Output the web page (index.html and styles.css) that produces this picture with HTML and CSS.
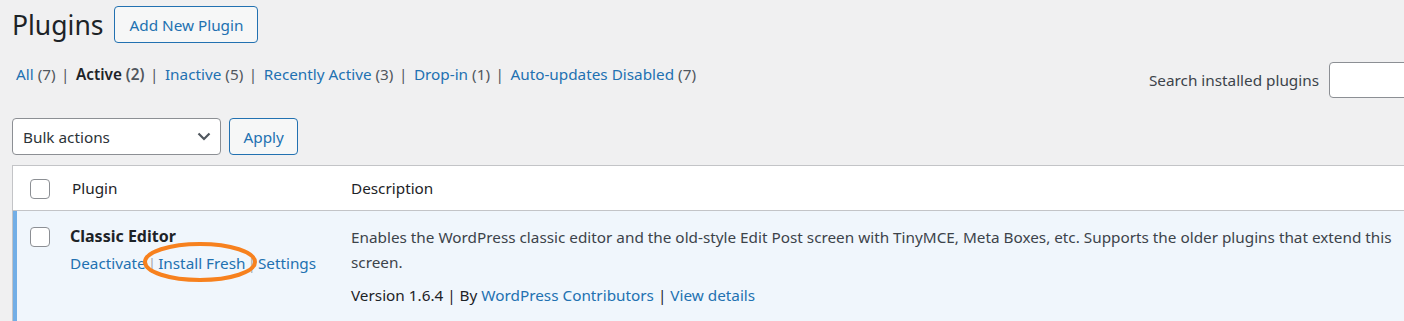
FILE: index.html
```html
<!DOCTYPE html>
<html lang="en">
<head>
    <meta charset="UTF-8">
    <meta name="viewport" content="width=device-width, initial-scale=1.0">
    <title>Plugins</title>
    <link rel="stylesheet" href="styles.css">
</head>
<body>

<div class="wrap">
    <div class="page-head">
        <h1 class="page-title">Plugins</h1>
        <a href="#" class="title-action">Add New Plugin</a>
    </div>

    <div class="filter-bar">
        <ul class="subsubsub">
            <li><a href="#">All <span class="count">(7)</span></a><span class="sep">|</span></li>
            <li><a href="#" class="current">Active <span class="count">(2)</span></a><span class="sep">|</span></li>
            <li><a href="#">Inactive <span class="count">(5)</span></a><span class="sep">|</span></li>
            <li><a href="#">Recently Active <span class="count">(3)</span></a><span class="sep">|</span></li>
            <li><a href="#">Drop-in <span class="count">(1)</span></a><span class="sep">|</span></li>
            <li><a href="#">Auto-updates Disabled <span class="count">(7)</span></a></li>
        </ul>
        <div class="search-box">
            <label for="plugin-search">Search installed plugins</label>
            <input type="search" id="plugin-search">
        </div>
    </div>

    <div class="tablenav">
        <div class="fake-select">
            <span>Bulk actions</span>
            <svg width="14" height="9" viewBox="0 0 14 9"><path d="M1.5 1.5 L7 7 L12.5 1.5" fill="none" stroke="#50575e" stroke-width="2.2"/></svg>
        </div>
        <button class="button">Apply</button>
    </div>

    <table class="plugins">
        <thead>
            <tr>
                <td class="check-column"><span class="checkbox"></span></td>
                <th class="col-name">Plugin</th>
                <th class="col-desc">Description</th>
            </tr>
        </thead>
        <tbody>
            <tr class="active">
                <th class="check-column"><span class="checkbox"></span></th>
                <td class="plugin-title">
                    <strong>Classic Editor</strong>
                    <div class="row-actions">
                        <a href="#">Deactivate</a><span class="sep">|</span><a href="#">Install Fresh</a><span class="sep">|</span><a href="#">Settings</a>
                        <svg class="marker" width="116" height="42" viewBox="0 0 116 42"><ellipse cx="58" cy="21" rx="55" ry="18" fill="none" stroke="#f7811e" stroke-width="4"/></svg>
                    </div>
                </td>
                <td class="desc">
                    <p>Enables the WordPress classic editor and the old-style Edit Post screen with TinyMCE, Meta Boxes, etc. Supports the older plugins that extend this screen.</p>
                    <div class="meta">Version 1.6.4 | By <a href="#">WordPress Contributors</a> | <a href="#">View details</a></div>
                </td>
            </tr>
        </tbody>
    </table>
</div>

</body>
</html>
```

FILE: styles.css
```css
body {
    margin: 0;
    background-color: #f0f0f1;
    color: #3c434a;
    font-family: "Noto Sans", "Open Sans", sans-serif;
    font-size: 15.3px;
    overflow: hidden;
}
a {
    color: #2271b1;
    text-decoration: none;
}
.wrap {
    width: 1404px;
    padding-left: 12px;
}
.page-head {
    display: flex;
    align-items: center;
    gap: 11px;
    padding-top: 6px;
    height: 37px;
}
.page-title {
    margin: 0;
    font-size: 26.5px;
    font-weight: 400;
    color: #1d2327;
}
.title-action {
    display: flex;
    align-items: center;
    height: 35px;
    padding: 0 14px;
    border: 1px solid #2271b1;
    border-radius: 4px;
    background-color: #f6f7f7;
}
.filter-bar {
    display: flex;
    justify-content: space-between;
    align-items: flex-start;
    margin-top: 18px;
    height: 37px;
}
.subsubsub {
    list-style: none;
    margin: 0;
    padding: 1px 0 0 4px;
    line-height: 24px;
    color: #50575e;
    display: flex;
}
.subsubsub .sep {
    margin: 0 6.5px 0 5.5px;
}
.subsubsub .count {
    color: #50575e;
}
.subsubsub .current {
    color: #1d2327;
    font-weight: 600;
}
.search-box {
    display: flex;
    align-items: center;
    gap: 10px;
    margin-right: -33px;
    padding-top: 1px;
}
.search-box label {
    color: #3c434a;
}
.search-box input {
    width: 120px;
    height: 36px;
    padding: 0;
    border: 1px solid #8c8f94;
    border-radius: 4px;
    background-color: #fff;
}
.tablenav {
    display: flex;
    gap: 8px;
    margin-top: 20px;
    height: 37px;
}
.fake-select {
    display: flex;
    align-items: center;
    justify-content: space-between;
    width: 188px;
    padding: 0 9px 0 10px;
    border: 1px solid #8c8f94;
    border-radius: 4px;
    background-color: #fff;
    color: #2c3338;
}
.button {
    font-family: inherit;
    font-size: 15.3px;
    color: #2271b1;
    padding: 0 13.5px;
    border: 1px solid #2271b1;
    border-radius: 4px;
    background-color: #f6f7f7;
}
.plugins {
    margin-top: 10px;
    width: 1404px;
    border-collapse: collapse;
    border: 1px solid #c3c4c7;
    background-color: #fff;
    table-layout: fixed;
}
.plugins thead th,
.plugins thead td {
    height: 44px;
    padding: 0 12px;
    text-align: left;
    font-weight: 400;
    color: #1d2327;
    border-bottom: 1px solid #c3c4c7;
    vertical-align: middle;
}
.plugins .check-column {
    width: 30px;
    padding: 0 0 0 17px;
}
.plugins thead .check-column .checkbox {
    margin-top: 2px;
}
.plugins .col-name {
    width: 255px;
}
.checkbox {
    display: block;
    width: 18px;
    height: 18px;
    border: 1px solid #8c8f94;
    border-radius: 4px;
    background-color: #fff;
}
.plugins tbody tr {
    background-color: #f0f6fc;
}
.plugins tbody td,
.plugins tbody th {
    vertical-align: top;
    padding: 14px 12px 40px;
    text-align: left;
}
.plugins tbody .check-column {
    padding: 16px 0 0 17px;
    box-shadow: inset 4px 0 0 #72aee6;
}
.plugin-title {
    padding-left: 10px !important;
}
.plugin-title strong {
    display: block;
    font-size: 16px;
    line-height: 22px;
    font-weight: 700;
    color: #1d2327;
}
.row-actions {
    position: relative;
    margin-top: 4px;
    line-height: 24px;
    color: #a7aaad;
}
.row-actions .sep {
    margin: 0 2px;
}
.marker {
    position: absolute;
    left: 72px;
    top: -10px;
}
.desc {
    padding-top: 14px !important;
}
.desc p {
    margin: 0;
    line-height: 25px;
}
.meta {
    margin-top: 8px;
    line-height: 25px;
    color: #1d2327;
}
```
